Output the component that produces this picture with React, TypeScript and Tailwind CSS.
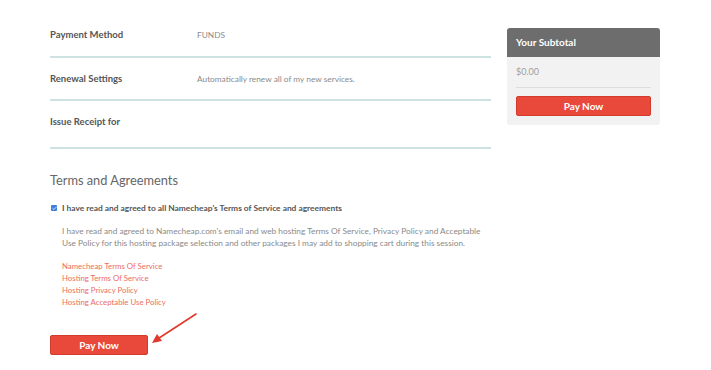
import { Check } from "lucide-react";

const rows = [
  { label: "Payment Method", value: "FUNDS", pt: "pt-0", pb: "pb-[14px]" },
  { label: "Renewal Settings", value: "Automatically renew all of my new services.", pt: "pt-[14px]", pb: "pb-[13px]" },
  { label: "Issue Receipt for", value: "", pt: "pt-[14px]", pb: "pb-[18px]" },
];

const links = [
  "Namecheap Terms Of Service",
  "Hosting Terms Of Service",
  "Hosting Privacy Policy",
  "Hosting Acceptable Use Policy",
];

const PayButton = ({ className }: { className: string }) => (
  <button
    className={`flex items-center justify-center rounded-[2px] border border-[#d13b2c] bg-[#e8493a] text-[10px] font-bold text-white ${className}`}
  >
    Pay Now
  </button>
);

export default function App() {
  return (
    <div className="relative h-[370px] w-[711px] overflow-hidden bg-white font-['Lato',sans-serif]">
      <div className="flex items-start gap-4 pl-[50px] pt-[28px]">
        <div className="w-[441px]">
          {rows.map((row) => (
            <div
              key={row.label}
              className={`flex border-b-2 border-[#cde2e1] ${row.pt} ${row.pb}`}
            >
              <span className="w-[147px] text-[9.5px] font-bold leading-[14px] text-[#555]">
                {row.label}
              </span>
              <span className="text-[8.3px] leading-[14px] text-[#8a8a8a]">{row.value}</span>
            </div>
          ))}

          <h2 className="mt-[23px] text-[12.8px] leading-[16px] text-[#666]">
            Terms and Agreements
          </h2>

          <div className="mt-[14px] flex items-center gap-[5px] pl-[1px]">
            <span className="flex h-[6px] w-[6px] items-center justify-center rounded-[1px] bg-[#3d7fd9]">
              <Check className="h-[5px] w-[5px] text-white" strokeWidth={4} />
            </span>
            <span className="whitespace-nowrap text-[8.4px] font-bold leading-[12px] text-[#555]">
              I have read and agreed to all Namecheap's Terms of Service and agreements
            </span>
          </div>

          <p className="mt-[11px] whitespace-nowrap pl-[12px] text-[8.3px] leading-[12px] text-[#8a8a8a]">
            I have read and agreed to Namecheap.com's email and web hosting Terms Of Service, Privacy Policy and Acceptable
            <br />
            Use Policy for this hosting package selection and other packages I may add to shopping cart during this session.
          </p>

          <div className="mt-[11px] flex flex-col pl-[12px] text-[7.8px] leading-[12px] text-[#ec6d62]">
            {links.map((l) => (
              <a key={l} href="#">
                {l}
              </a>
            ))}
          </div>

          <PayButton className="mt-[27px] h-[20px] w-[98px]" />
        </div>

        <div className="w-[153px] overflow-hidden rounded-[3px] bg-[#f2f2f2]">
          <div className="flex h-[29px] items-center bg-[#6d6d6d] px-[9px] text-[10px] font-bold text-white">
            Your Subtotal
          </div>
          <div className="px-[9px] pb-[9px]">
            <div className="border-b border-[#dddddd] pb-[8px] pt-[8px] text-[9px] leading-[14px] text-[#a0a0a0]">
              $0.00
            </div>
            <PayButton className="mt-[8px] h-[20px] w-full" />
          </div>
        </div>
      </div>

      <svg className="absolute left-[148px] top-[310px]" width="52" height="36" viewBox="0 0 52 36">
        <line x1="48" y1="4" x2="8" y2="30" stroke="#e0392b" strokeWidth="1.6" strokeLinecap="round" />
        <path d="M4 33 L9 24 L14 31 Z" fill="#e0392b" />
      </svg>
    </div>
  );
}
